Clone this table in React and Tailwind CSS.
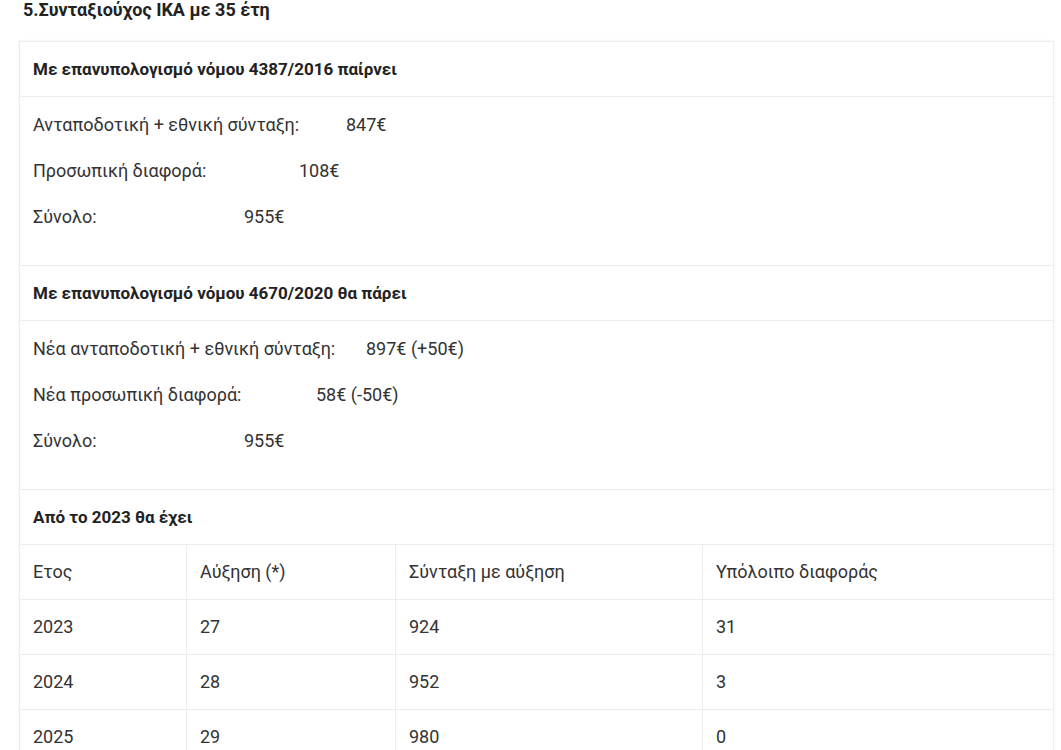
import React from 'react';

const Line = ({ label, value, w }) => (
  <p className="mb-[20px] leading-[26px]">
    <span className={`inline-block ${w}`}>{label}</span>
    <span>{value}</span>
  </p>
);

const rows = [
  ['2023', '27', '924', '31'],
  ['2024', '28', '952', '3'],
  ['2025', '29', '980', '0'],
];

const App = () => {
  const cell = 'border border-[#ededed] px-[13px] py-[15px] leading-[24px] text-left align-middle';
  const head = 'border border-[#ededed] px-[13px] py-[15px] leading-[24px] text-left align-middle text-[17px] font-bold text-[#222]';

  return (
    <div className="min-h-screen bg-white text-[18px] text-[#333] font-['Roboto','Liberation_Sans',sans-serif]">
      <div className="h-[41px] pl-[23px]">
        <h3 className="text-[18px] font-bold leading-[20px] text-[#222]">
          5.Συνταξιούχος ΙΚΑ με 35 έτη
        </h3>
      </div>

      <div className="pl-[19px] w-[1053px]">
        <table className="w-[1034px] border-collapse table-fixed shadow-[0_0_3px_rgba(0,0,0,0.06)]">
          <colgroup>
            <col className="w-[167px]" />
            <col className="w-[209px]" />
            <col className="w-[307px]" />
            <col className="w-[351px]" />
          </colgroup>
          <tbody>
            <tr>
              <td colSpan={4} className={head}>
                Με επανυπολογισμό νόμου 4387/2016 παίρνει
              </td>
            </tr>
            <tr>
              <td colSpan={4} className="border border-[#ededed] px-[13px] pt-[15px] pb-[15px]">
                <Line label="Ανταποδοτική + εθνική σύνταξη:" value="847€" w="w-[313px]" />
                <Line label="Προσωπική διαφορά:" value="108€" w="w-[266px]" />
                <Line label="Σύνολο:" value="955€" w="w-[211px]" />
              </td>
            </tr>
            <tr>
              <td colSpan={4} className={head}>
                Με επανυπολογισμό νόμου 4670/2020 θα πάρει
              </td>
            </tr>
            <tr>
              <td colSpan={4} className="border border-[#ededed] px-[13px] pt-[15px] pb-[15px]">
                <Line label="Νέα ανταποδοτική + εθνική σύνταξη:" value="897€ (+50€)" w="w-[333px]" />
                <Line label="Νέα προσωπική διαφορά:" value="58€ (-50€)" w="w-[283px]" />
                <Line label="Σύνολο:" value="955€" w="w-[211px]" />
              </td>
            </tr>
            <tr>
              <td colSpan={4} className={head}>
                Από το 2023 θα έχει
              </td>
            </tr>
            <tr>
              <td className={cell}>Ετος</td>
              <td className={cell}>Αύξηση (*)</td>
              <td className={cell}>Σύνταξη με αύξηση</td>
              <td className={cell}>Υπόλοιπο διαφοράς</td>
            </tr>
            {rows.map((r) => (
              <tr key={r[0]}>
                {r.map((v, i) => (
                  <td key={i} className={cell}>{v}</td>
                ))}
              </tr>
            ))}
          </tbody>
        </table>
      </div>
    </div>
  );
};

export default App;
